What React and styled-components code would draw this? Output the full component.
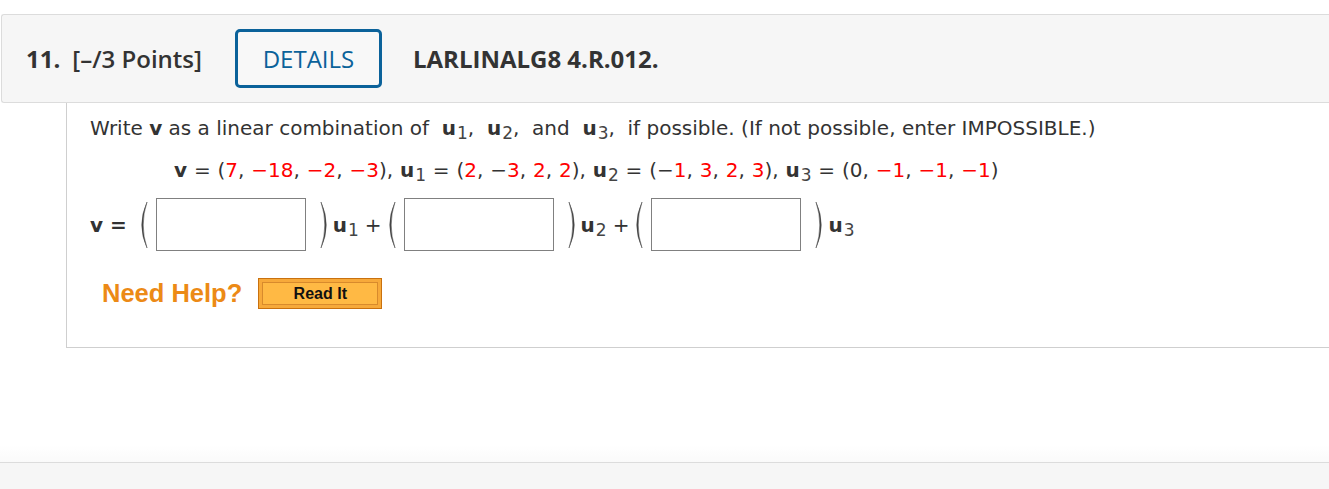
import React from "react";
import styled, { createGlobalStyle } from "styled-components";

const Global = createGlobalStyle`
  html, body { margin: 0; padding: 0; background: #fff; overflow: hidden; }
  body { font-family: "DejaVu Sans", Verdana, sans-serif; color: #333; }
`;

const Page = styled.div`
  width: 1329px;
  height: 489px;
  display: flex;
  flex-direction: column;
  padding-top: 14px;
  box-sizing: border-box;
`;

const Header = styled.div`
  margin-left: 1px;
  height: 89px;
  box-sizing: border-box;
  background: #f6f6f6;
  border: 1px solid #dcdcdc;
  border-right: none;
  border-radius: 3px 0 0 3px;
  display: flex;
  align-items: center;
  padding-left: 24px;
  font-family: "Open Sans", sans-serif;
  font-size: 24px;
  color: #333;
`;

const QNum = styled.span`
  font-weight: 700;
  margin-right: 12px;
`;

const Points = styled.span`
  font-weight: 600;
  margin-right: 33px;
`;

const DetailsButton = styled.button`
  width: 147px;
  height: 59px;
  box-sizing: border-box;
  border: 3px solid #0b629a;
  border-radius: 5px;
  background: #f8f8f8;
  color: #0b629a;
  font-family: "Open Sans", sans-serif;
  font-size: 24px;
  font-weight: 400;
  margin-right: 31px;
  padding: 0;
  display: flex;
  align-items: center;
  justify-content: center;
`;

const Code = styled.span`
  font-weight: 700;
`;

const Body = styled.div`
  margin-left: 66px;
  height: 245px;
  box-sizing: border-box;
  border-left: 1px solid #cfcfcf;
  border-bottom: 1px solid #cfcfcf;
  padding: 14px 0 0 23px;
  font-size: 20px;
`;

const Line = styled.div`
  line-height: 22px;
  white-space: pre;
`;

const EqLine = styled(Line)`
  margin-top: 20px;
  padding-left: 84px;
  word-spacing: 0.5px;
`;

const Bold = styled.b`
  font-weight: 700;
`;

const Red = styled.span`
  color: #f00;
`;

const SubVec = styled.span`
  font-weight: 700;
  & > sub {
    font-weight: 400;
    font-size: 0.85em;
    color: #444;
    vertical-align: -0.25em;
    line-height: 0;
    margin-left: 1px;
  }
`;

const AnswerRow = styled.div`
  display: flex;
  align-items: center;
  margin-top: 17px;
  height: 53px;
`;

const Label = styled.span`
  font-weight: 700;
  font-size: 20px;
  margin-right: 10px;
`;

const Plus = styled.span`
  margin: 0 3px 0 6px;
  font-size: 20px;
`;

const Box = styled.input`
  width: 150px;
  height: 53px;
  box-sizing: border-box;
  border: 1px solid #808080;
  background: #fff;
  margin: 0 ${(p) => p.$right}px 0 ${(p) => p.$left}px;
  padding: 0;
`;

const ParenSvg = styled.svg`
  display: block;
  flex: none;
  margin-right: ${(p) => p.$gap}px;
`;

const Paren = ({ right }) => (
  <ParenSvg width="11" height="48" viewBox="0 0 11 48" $gap={right ? 2 : 0}>
    <path
      d={
        right
          ? "M1 1 Q11.5 24 1 47 Q8.6 24 1 1 Z"
          : "M10 1 Q-0.5 24 10 47 Q2.4 24 10 1 Z"
      }
      fill="#444"
      stroke="#444"
      strokeWidth="0.5"
    />
  </ParenSvg>
);

const HelpRow = styled.div`
  display: flex;
  align-items: center;
  margin-top: 27px;
  padding-left: 12px;
`;

const NeedHelp = styled.span`
  font-family: "Liberation Sans", Arial, sans-serif;
  font-weight: 700;
  font-size: 25.5px;
  color: #ec8a16;
  margin-right: 16px;
`;

const ReadIt = styled.button`
  width: 124px;
  height: 31px;
  box-sizing: border-box;
  padding: 3px;
  border: 1px solid #c9710f;
  background: #f7a93a;
  display: flex;
`;

const ReadItInner = styled.span`
  flex: 1;
  border: 1px solid #d88a2c;
  background: #ffb944;
  font-family: "Liberation Sans", Arial, sans-serif;
  font-weight: 700;
  font-size: 16px;
  color: #111;
  display: flex;
  align-items: center;
  justify-content: center;
`;

const Spacer = styled.div`
  flex: 1;
  background: linear-gradient(to bottom, #fff 0, #fff 85%, #fafafa 100%);
`;

const Footer = styled.div`
  height: 26px;
  background: #f6f6f6;
  border-top: 1px solid #dcdcdc;
`;

const U = ({ n }) => (
  <SubVec>
    u<sub>{n}</sub>
  </SubVec>
);

export default function App() {
  return (
    <>
      <Global />
      <Page>
        <Header>
          <QNum>11.</QNum>
          <Points>[–/3 Points]</Points>
          <DetailsButton>DETAILS</DetailsButton>
          <Code>LARLINALG8 4.R.012.</Code>
        </Header>
        <Body>
          <Line>
            Write <Bold>v</Bold> as a linear combination of  <U n="1" />,  <U n="2" />,  and  <U n="3" />,  if possible. (If not possible, enter IMPOSSIBLE.)
          </Line>
          <EqLine>
            <Bold>v</Bold> = (<Red>7</Red>, <Red>−18</Red>, <Red>−2</Red>, <Red>−3</Red>), <U n="1" /> = (<Red>2</Red>, −<Red>3</Red>, <Red>2</Red>, <Red>2</Red>), <U n="2" /> = (−<Red>1</Red>, <Red>3</Red>, <Red>2</Red>, <Red>3</Red>), <U n="3" /> = (0, <Red>−1</Red>, <Red>−1</Red>, <Red>−1</Red>)
          </EqLine>
          <AnswerRow>
            <Label>v =</Label>
            <Paren />
            <Box $left={8} $right={14} />
            <Paren right />
            <U n="1" />
            <Plus>+</Plus>
            <Paren />
            <Box $left={8} $right={14} />
            <Paren right />
            <U n="2" />
            <Plus>+</Plus>
            <Paren />
            <Box $left={8} $right={14} />
            <Paren right />
            <U n="3" />
          </AnswerRow>
          <HelpRow>
            <NeedHelp>Need Help?</NeedHelp>
            <ReadIt>
              <ReadItInner>Read It</ReadItInner>
            </ReadIt>
          </HelpRow>
        </Body>
        <Spacer />
        <Footer />
      </Page>
    </>
  );
}
